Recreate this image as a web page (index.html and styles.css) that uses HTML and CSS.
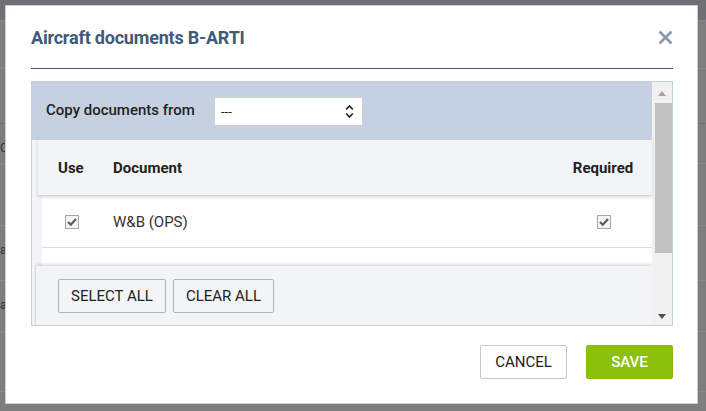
FILE: index.html
```html
<!DOCTYPE html>
<html lang="en">
<head>
<meta charset="utf-8">
<title>Aircraft documents B-ARTI</title>
<link rel="stylesheet" href="styles.css">
</head>
<body>
<div class="page">
  <div class="page-top"></div>
  <div class="page-row r1"></div>
  <div class="page-row r2 head"></div>
  <div class="page-row r3"><span class="ghost">C</span></div>
  <div class="page-row r4"></div>
  <div class="page-row r5"><span class="ghost">a</span></div>
  <div class="page-row r6"><span class="ghost">a</span></div>
  <div class="page-row r7"></div>
</div>

<div class="overlay">
  <div class="modal">
    <div class="modal-header">
      <h2 class="modal-title">Aircraft documents B-ARTI</h2>
      <button class="close" aria-label="Close">
        <svg width="15" height="15" viewBox="0 0 15 15"><path d="M1.5 1.5 L13.5 13.5 M13.5 1.5 L1.5 13.5" stroke="#8a99ab" stroke-width="2.6" fill="none"/></svg>
      </button>
    </div>

    <div class="panel">
      <div class="panel-content">
        <div class="copy-bar">
          <span class="copy-label">Copy documents from</span>
          <div class="select">
            <span class="select-value">---</span>
            <svg class="select-arrows" width="9" height="15" viewBox="0 0 9 15"><path d="M1.2 5.5 L4.5 2 L7.8 5.5 M1.2 9.5 L4.5 13 L7.8 9.5" stroke="#222" stroke-width="1.7" fill="none"/></svg>
          </div>
        </div>

        <div class="list-area">
          <div class="list-head">
            <span class="col-use">Use</span>
            <span class="col-doc">Document</span>
            <span class="col-req">Required</span>
          </div>
          <div class="list-body">
            <div class="list-row">
              <span class="col-use cell-check">
                <svg width="14" height="14" viewBox="0 0 14 14"><rect x="0.5" y="0.5" width="13" height="13" fill="#f4f4f4" stroke="#a6a6a6"/><path d="M3 7 L5.8 9.8 L11 4" stroke="#5a5a5a" stroke-width="2.1" fill="none"/></svg>
              </span>
              <span class="col-doc">W&amp;B (OPS)</span>
              <span class="col-req cell-check">
                <svg width="14" height="14" viewBox="0 0 14 14"><rect x="0.5" y="0.5" width="13" height="13" fill="#f4f4f4" stroke="#a6a6a6"/><path d="M3 7 L5.8 9.8 L11 4" stroke="#5a5a5a" stroke-width="2.1" fill="none"/></svg>
              </span>
            </div>
          </div>
          <div class="list-actions">
            <button class="btn-light">SELECT ALL</button>
            <button class="btn-light">CLEAR ALL</button>
          </div>
        </div>
      </div>

      <div class="scrollbar">
        <div class="sb-btn sb-up"><span class="tri-up"></span></div>
        <div class="sb-thumb"></div>
        <div class="sb-space"></div>
        <div class="sb-btn sb-down"><span class="tri-down"></span></div>
      </div>
    </div>

    <div class="modal-footer">
      <button class="btn btn-cancel">CANCEL</button>
      <button class="btn btn-save">SAVE</button>
    </div>
  </div>
</div>
</body>
</html>
```

FILE: styles.css
```css
* { box-sizing: border-box; }

html, body {
  margin: 0;
  padding: 0;
  width: 706px;
  height: 411px;
  overflow: hidden;
}

body {
  background: #7e7e7e;
  font-family: Roboto, "Liberation Sans", Arial, sans-serif;
  color: #222;
  font-size: 15px;
}

/* background page (dimmed) */
.page {
  display: flex;
  flex-direction: column;
}
.page-top {
  height: 21px;
  background: #6f7073;
  border-bottom: 1px solid #858585;
}
.page-row {
  border-bottom: 1px solid #888;
  font-size: 12px;
  color: #333;
}
.page-row.r1 { height: 48px; }
.page-row.r2 { height: 55px; border-bottom-color: #6c7480; }
.page-row.r3 { height: 40px; }
.page-row.r4 { height: 62px; }
.page-row.r5 { height: 55px; }
.page-row.r6 { height: 51px; }
.page-row.r7 { height: 60px; }
.ghost {
  display: block;
  padding-top: 17px;
}

/* modal overlay */
.overlay {
  position: fixed;
  inset: 0;
  padding: 5px 0 0 5px;
}

.modal {
  width: 693px;
  height: 399px;
  background: #fff;
  border: 1px solid #c7d1dd;
  padding: 0 24px 0 25px;
  display: flex;
  flex-direction: column;
}

.modal-header {
  height: 63px;
  display: flex;
  align-items: center;
  justify-content: space-between;
  border-bottom: 1px solid #3d5a78;
}

.modal-title {
  margin: 0;
  font-size: 18px;
  font-weight: 700;
  color: #3e5a7a;
  letter-spacing: -0.2px;
}

.close {
  border: 0;
  background: none;
  padding: 0;
  margin: 0;
  width: 15px;
  height: 15px;
  display: flex;
}

/* scroll panel */
.panel {
  margin-top: 12px;
  height: 245px;
  border: 1px solid #c5d1e0;
  display: flex;
  overflow: hidden;
}

.panel-content {
  flex: 1;
  display: flex;
  flex-direction: column;
  min-width: 0;
}

.copy-bar {
  height: 58px;
  flex: none;
  background: #c5d1e1;
  display: flex;
  align-items: center;
  padding-left: 14px;
}

.copy-label {
  width: 168px;
  font-weight: 500;
  font-size: 15px;
  color: #1f1f1f;
  margin-top: -2px;
}

.select {
  width: 149px;
  height: 29px;
  background: #fff;
  border: 1px solid #cfcfcf;
  border-radius: 2px;
  display: flex;
  align-items: center;
  justify-content: space-between;
  padding: 0 8px 0 6px;
  font-size: 13px;
}

.list-area {
  flex: 1;
  background: #f3f4f6;
  display: flex;
  flex-direction: column;
}

.list-head,
.list-row {
  display: grid;
  grid-template-columns: 55px 1fr 64px;
  align-items: center;
}

.list-head {
  margin-left: 6px;
  height: 55px;
  padding: 0 17px 0 20px;
  background: #f3f4f6;
  font-weight: 700;
  font-size: 15px;
  color: #222;
  box-shadow: 0 2px 3px rgba(120, 140, 170, 0.35);
  position: relative;
  z-index: 1;
}

.col-req { text-align: center; }

.list-body {
  margin-left: 10px;
  background: #fff;
  padding-bottom: 18px;
  margin-top: 1px;
}

.list-row {
  height: 52px;
  padding: 0 17px 0 16px;
  border-bottom: 1px solid #d3dae4;
  font-size: 15px;
  color: #333;
}

.cell-check {
  display: flex;
  align-items: center;
}
.list-row .col-use { padding-left: 7px; }
.list-row .col-req { justify-content: center; padding-left: 2px; }

.list-actions {
  flex: 1;
  margin-left: 4px;
  background: #f3f4f6;
  display: flex;
  align-items: flex-start;
  gap: 7px;
  padding: 13px 0 0 22px;
  box-shadow: 0 -2px 3px rgba(0, 0, 0, 0.13), -1px 0 1px rgba(0, 0, 0, 0.05);
}

.btn-light {
  height: 34px;
  padding: 0 12px;
  background: #f3f4f6;
  border: 1px solid #b4b4b4;
  border-radius: 2px;
  font-family: Roboto, "Liberation Sans", Arial, sans-serif;
  font-size: 15px;
  color: #222;
}

/* fake scrollbar */
.scrollbar {
  width: 20px;
  flex: none;
  background: #f1f1f1;
  display: flex;
  flex-direction: column;
  align-items: center;
}
.sb-btn {
  height: 20px;
  width: 100%;
  display: flex;
  justify-content: center;
  align-items: center;
}
.sb-up { height: 21px; }
.tri-up {
  width: 0;
  height: 0;
  border-left: 4px solid transparent;
  border-right: 4px solid transparent;
  border-bottom: 5px solid #a3a3a3;
  margin-top: 1px;
}
.tri-down {
  width: 0;
  height: 0;
  border-left: 4px solid transparent;
  border-right: 4px solid transparent;
  border-top: 5px solid #505050;
  margin-top: 2px;
}
.sb-thumb {
  width: 17px;
  height: 150px;
  background: #c1c1c1;
  margin-left: 2px;
}
.sb-space { flex: 1; }

/* footer */
.modal-footer {
  display: flex;
  justify-content: flex-end;
  gap: 19px;
  padding: 19px 0 0 0;
}

.btn {
  width: 87px;
  height: 34px;
  border-radius: 2px;
  font-family: Roboto, "Liberation Sans", Arial, sans-serif;
  font-size: 15px;
}
.btn-cancel {
  background: #fff;
  border: 1px solid #c6c6c6;
  color: #222;
}
.btn-save {
  background: #8bc10d;
  border: 1px solid #86b80f;
  color: #fff;
  font-weight: 500;
}
```
